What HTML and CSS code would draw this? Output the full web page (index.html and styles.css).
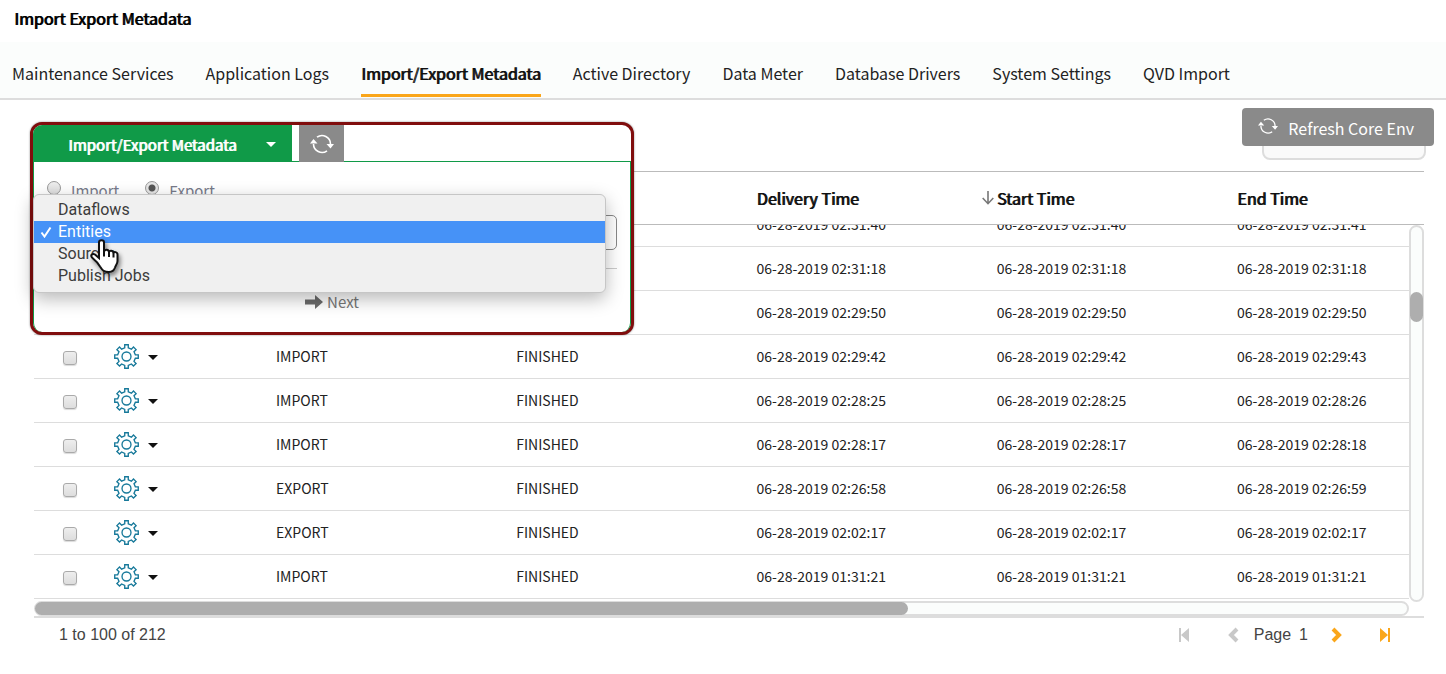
FILE: index.html
```html
<!DOCTYPE html>
<html lang="en">
<head>
<meta charset="utf-8">
<title>Import Export Metadata</title>
<link rel="stylesheet" href="styles.css">
</head>
<body>
<svg class="sprite" aria-hidden="true">
  <symbol id="gear" viewBox="0 0 24 24"><path d="M10.300 .7h3.400v2.900l3 1.300 2-2 2.500 2.500-2 2 1.300 3h2.800v3.300h-2.800l-1.300 3 2 2-2.500 2.500-2-2-3 1.300v2.800h-3.400v-2.800l-3-1.300-2 2-2.500-2.500 2-2-1.300-3H.7v-3.300h2.800l1.300-3-2-2 2.500-2.500 2 2 3-1.300z"/><circle cx="12" cy="12" r="4.300"/></symbol>
  <symbol id="refresh" viewBox="0 0 24 20"><path class="line" d="M7 3.200A8.500 8.500 0 0 1 20.500 10M17 16.800A8.500 8.500 0 0 1 3.500 10"/><path class="tip" d="M16.500 10h7.500l-3.500 4.500zM0 9.500h7.500L3.500 5z"/></symbol>
</svg>
<header class="page-head"><h1>Import Export Metadata</h1></header>
<nav class="tabs">
  <a href="#">Maintenance Services</a>
  <a href="#">Application Logs</a>
  <a href="#" class="active" aria-current="page">Import/Export Metadata</a>
  <a href="#">Active Directory</a>
  <a href="#">Data Meter</a>
  <a href="#">Database Drivers</a>
  <a href="#">System Settings</a>
  <a href="#">QVD Import</a>
</nav>
<main class="content">
  <div class="toolbar">
    <input class="search" type="search" aria-label="Quick search">
    <button class="core-refresh" type="button"><svg class="icon-refresh small"><use href="#refresh"/></svg>Refresh Core Env</button>
  </div>

  <section class="panel" aria-label="Import or export">
    <div class="panel-bar">
      <button class="panel-toggle" type="button"><span>Import/Export Metadata</span><i class="caret"></i></button>
      <button class="refresh" type="button" aria-label="Refresh"><svg class="icon-refresh"><use href="#refresh"/></svg></button>
    </div>
    <form class="panel-body">
      <div class="radios">
        <label><input type="radio" name="mode">Import</label>
        <label><input type="radio" name="mode" checked>Export</label>
      </div>
      <select class="kind" aria-label="Object type"><option>Entities</option></select>
      <div class="actions">
        <button class="next" type="button"><svg viewBox="0 0 18 14"><path d="M0 4.500h10V0l8 7-8 7V9.500H0z"/></svg>Next</button>
      </div>
    </form>
    <ul class="menu" role="listbox" aria-label="Object type options">
      <li role="option">Dataflows</li>
      <li role="option" class="selected" aria-selected="true"><svg viewBox="0 0 12 12"><path d="M1.500 6.500l3 4L10.500 1.500"/></svg>Entities</li>
      <li role="option">Sources</li>
      <li role="option">Publish Jobs</li>
    </ul>
    <svg class="pointer" viewBox="0 0 32 36"><path d="M10 3.500c0-3 5-3 5 0V13c0-3 5-2.800 5 .3 0-2.300 4.500-2 4.500 1 0-2 4-1.500 4 1.200v6.500c0 3-2 4.500-2.500 6.500-1 3-2.500 4.500-6 4.500-5 0-6.500-1.500-9-5.500-2-3.500-4.500-6-7.500-8.500-3-2.500 0-5 2.500-3.500L10 19z"/><path class="knuckle" d="M15 12v5.500M20 13v5M24.500 14v4.500"/></svg>
  </section>

  <div class="grid">
    <table>
      <thead><tr><th></th><th></th><th></th><th></th><th>Delivery Time</th><th class="sorted"><svg viewBox="0 0 12 14"><path d="M6 0v12.500M.7 7L6 12.700 11.300 7"/></svg>Start Time</th><th>End Time</th></tr></thead>
      <tbody id="rows"></tbody>
    </table>
    <div class="vbar"><div class="vthumb"></div></div>
  </div>
  <div class="hbar"><div class="hthumb"></div></div>
  <footer class="pager">
    <span>1 to 100 of 212</span>
    <div class="pages">
      <button type="button" class="off" aria-label="First page"><svg class="edge" viewBox="0 0 12 14"><path class="fill" d="M1 0h2v14H1zM11 0v14L3 7z"/></svg></button>
      <button type="button" class="off prev" aria-label="Previous page"><svg class="step" viewBox="0 0 12 16"><path d="M10 2L4 8l6 6"/></svg></button>
      <span>Page</span><span class="num">1</span>
      <button type="button" class="step-next" aria-label="Next page"><svg class="step" viewBox="0 0 12 16"><path d="M2 2l6 6-6 6"/></svg></button>
      <button type="button" aria-label="Last page"><svg class="edge" viewBox="0 0 12 14"><path class="fill" d="M9 0h2v14H9zM1 0v14l8-7z"/></svg></button>
    </div>
  </footer>
</main>
<script src="rows.js"></script>
</body>
</html>
```
FILE: rows.js
```js
const rows = [
  ["IMPORT", "02:31:40", "02:31:40", "02:31:41"],
  ["IMPORT", "02:31:18", "02:31:18", "02:31:18"],
  ["IMPORT", "02:29:50", "02:29:50", "02:29:50"],
  ["IMPORT", "02:29:42", "02:29:42", "02:29:43"],
  ["IMPORT", "02:28:25", "02:28:25", "02:28:26"],
  ["IMPORT", "02:28:17", "02:28:17", "02:28:18"],
  ["EXPORT", "02:26:58", "02:26:58", "02:26:59"],
  ["EXPORT", "02:02:17", "02:02:17", "02:02:17"],
  ["IMPORT", "01:31:21", "01:31:21", "01:31:21"]
];
document.getElementById("rows").innerHTML = rows.map(([type, ...times]) => `<tr>
  <td><input type="checkbox" aria-label="Select row"></td>
  <td><button class="row-menu" type="button" aria-label="Row actions"><svg class="gear"><use href="#gear"/></svg><i class="caret"></i></button></td>
  <td>${type}</td><td>FINISHED</td>${times.map(t => `<td>06-28-2019 ${t}</td>`).join("")}
</tr>`).join("");
```
FILE: styles.css
```css
* { box-sizing: border-box; }
body { margin: 0; background: #fff; color: #222; font: 16px/24px "Noto Sans CJK SC", "Noto Sans", sans-serif; }
button { border: 0; margin: 0; padding: 0; background: none; font: inherit; color: inherit; }
.sprite { position: absolute; width: 0; height: 0; }
h1, th, .tabs .active, .panel-toggle span { font-weight: 400; text-shadow: 1px 0 currentColor; }
.page-head { padding: 6px 14px 12px; }
h1 { margin: 0; font-size: 16px; line-height: 24px; color: #000; }
.tabs { display: flex; gap: 32px; padding: 19px 12px 0; background: #fbfdfc; border-bottom: 2px solid #ddd; height: 58px; }
.tabs a { color: #222; text-decoration: none; white-space: nowrap; height: 36px; }
.tabs .active { color: #111; border-bottom: 3px solid #faa61a; }
.content { position: relative; padding: 0 22px 0 34px; }
.toolbar { display: flex; justify-content: flex-end; height: 71px; position: relative; margin-right: -2px; }
.search { width: 164px; height: 36px; margin-top: 24px; border: 2px solid #ddd; border-radius: 8px; background: #fafafa; }
.core-refresh { position: absolute; right: -8px; top: 8px; display: flex; align-items: center; gap: 10px; height: 38px; padding: 1px 20px 0 16px; border-radius: 4px; background: #8a8a8a; color: #fff; }
.icon-refresh { width: 24px; height: 20px; }
.icon-refresh.small { width: 20px; height: 18px; margin-top: -3px; }
.line { fill: none; stroke: #fff; stroke-width: 1.600; }
.tip { fill: #fff; }
.caret { width: 0; border: 5px solid transparent; border-top-color: currentColor; border-bottom: 0; }

.panel { position: absolute; z-index: 3; left: 30px; top: 22px; width: 604px; height: 213px; border: 3px solid #800d0d; border-radius: 12px; background: #fff; box-shadow: 0 0 2px rgba(0,0,0,.5); }
.panel-bar { display: flex; gap: 7px; height: 37px; }
.panel-toggle { display: flex; align-items: center; justify-content: space-between; width: 259px; padding: 2px 16px 0 35px; border-radius: 9px 0 0 0; background: #109a48; color: #fff; font-size: 15px; }
.refresh { display: flex; align-items: center; justify-content: center; width: 45px; background: #8a8a8a; }
.panel-body { margin-top: -1px; height: 171px; border: 1px solid #109a48; border-bottom: 0; border-radius: 0 0 9px 9px; padding: 17px 13px 0; color: #777a8a; }
.radios { display: flex; gap: 26px; height: 36px; font-size: 15px; line-height: 24px; }
.radios label { display: flex; gap: 10px; }
input[type="radio"] { appearance: none; width: 14px; height: 14px; margin: 2px 0 0; border: 1px solid #999; border-radius: 50%; background: linear-gradient(#eee, #ddd); }
input[type="radio"]:checked { background: radial-gradient(#555 0 3px, #e6e6e6 4px); }
.kind { display: block; width: 100%; height: 35px; border: 1px solid #888; border-radius: 5px; background: #fff; appearance: none; }
.actions { margin-top: 18px; border-top: 1px solid #ccc; display: flex; justify-content: center; padding: 21px 0 0 0; }
.next { display: flex; align-items: center; gap: 4px; font-size: 15px; color: #777; }
.next svg { width: 18px; height: 14px; fill: #6b6b6b; }
.menu { position: absolute; left: 0; top: 69px; width: 573px; margin: 0; padding: 4px 0 5px; list-style: none; border: 1px solid #c6c6c6; border-radius: 6px; background: #f0f0f0; box-shadow: 0 6px 18px rgba(0,0,0,.28); font: 16px/22px Roboto, sans-serif; color: #3c3c3c; }
.menu li { position: relative; padding-left: 24px; }
.menu .selected { background: #4692f7; color: #fff; }
.menu svg { position: absolute; left: 6px; top: 5px; width: 12px; height: 12px; fill: none; stroke: #fff; stroke-width: 2; }
.pointer { position: absolute; left: 56px; top: 114px; width: 32px; height: 36px; fill: #fff; stroke: #111; stroke-width: 2; filter: drop-shadow(2px 3px 2px rgba(0,0,0,.45)); }
.knuckle { fill: none; }

.grid { position: relative; border-top: 1px solid #bbb; }
table, thead, tbody { display: block; }
thead { position: relative; z-index: 1; background: #fff; border-bottom: 1px solid #bbb; padding-right: 15px; }
tr { display: grid; grid-template-columns: 80px 162px repeat(4, 1fr) 172px; align-items: center; }
thead tr { height: 52px; }
th { position: relative; padding: 0; text-align: left; font-size: 16px; color: #111; }
.sorted svg { position: absolute; left: -15px; top: 5px; width: 12px; height: 14px; fill: none; stroke: #777; stroke-width: 1.600; }
tbody { margin: -22px 15px 0 0; }
tbody tr { height: 44px; border-bottom: 1px solid #ddd; }
td { padding: 0 0 2px; font-size: 14px; line-height: 20px; white-space: nowrap; }
td input { appearance: none; display: block; width: 14px; height: 14px; margin: 4px 0 0 29px; border: 1px solid #aaa; border-radius: 3px; background: linear-gradient(#eee, #ddd); box-shadow: 0 1px 1px rgba(0,0,0,.15); }
.row-menu { display: flex; align-items: center; gap: 9px; color: #111; margin-top: 2px; }
.gear { width: 25px; height: 25px; fill: none; stroke: #17799a; stroke-width: 1.300; }
.row-menu .caret { margin-top: 2px; }
.vbar { position: absolute; right: 0; top: 53px; bottom: -3px; width: 15px; border: 2px solid #ddd; border-radius: 8px; background: #fbfdfc; }
.vthumb { width: 13px; height: 30px; margin: 65px 0 0 -1px; border-radius: 7px; background: #aeaeae; }
.hbar { margin: 2px 15px 0 0; height: 15px; border: 2px solid #ddd; border-radius: 8px; background: #fbfdfc; }
.hthumb { width: 873px; max-width: 64%; height: 13px; margin: -1px 0 0 -1px; border-radius: 7px; background: #aeaeae; }
.pager { display: flex; justify-content: space-between; border-top: 2px solid #ddd; padding: 5px 33px 0 25px; font: 16px/24px "Liberation Sans", sans-serif; color: #444; }
.pages { display: flex; align-items: center; }
.pages button { display: flex; color: #faa61a; }
.pages .off { color: #c8c8c8; }
.pages .prev { margin: 0 15px 0 37px; }
.num { margin: 0 23px 0 8px; }
.step-next { margin-right: 36px; }
.edge { width: 12px; height: 14px; }
.step { width: 12px; height: 16px; fill: none; stroke: currentColor; stroke-width: 4; }
.fill { fill: currentColor; }
```
